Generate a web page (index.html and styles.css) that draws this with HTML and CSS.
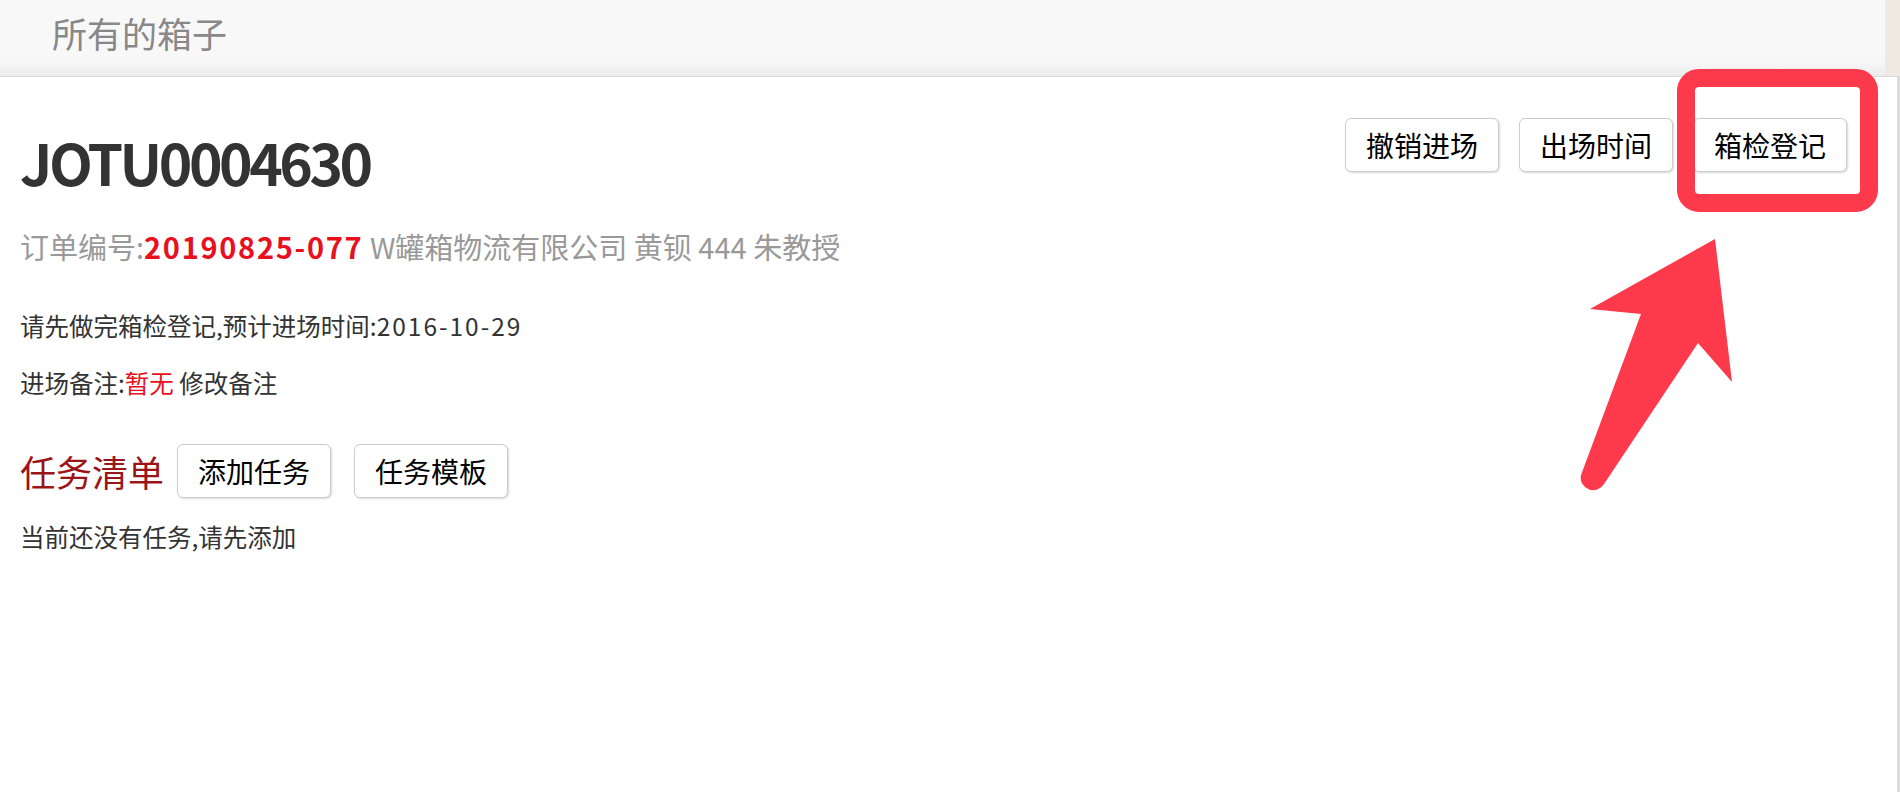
FILE: index.html
```html
<!DOCTYPE html>
<html lang="zh-CN">
<head>
    <meta charset="UTF-8">
    <title>所有的箱子</title>
    <link rel="stylesheet" href="styles.css">
</head>
<body>
    <header class="topbar">
        <span class="topbar-title">所有的箱子</span>
    </header>

    <main class="box-page">
        <div class="box-head">
            <h1 class="box-no">JOTU0004630</h1>
            <div class="box-actions">
                <button class="btn">撤销进场</button>
                <button class="btn">出场时间</button>
                <button class="btn">箱检登记</button>
            </div>
        </div>

        <p class="order-info">订单编号:<b class="order-no">20190825-077</b> W罐箱物流有限公司 黄钡 444 朱教授</p>

        <p class="notice notice-first">请先做完箱检登记,预计进场时间:<span class="date">2016-10-29</span></p>
        <p class="notice">进场备注:<span class="text-red">暂无</span> 修改备注</p>

        <div class="task-head">
            <h2 class="task-title">任务清单</h2>
            <button class="btn">添加任务</button>
            <button class="btn">任务模板</button>
        </div>
        <p class="notice notice-empty">当前还没有任务,请先添加</p>
    </main>

    <!-- annotation drawn over the page -->
    <div class="mark-box"></div>
    <svg class="mark-arrow" width="175" height="270" viewBox="1570 230 175 270">
        <path d="M1715 239 L1732 382 L1698 343 L1604 484 A12.5 12.5 0 0 1 1581 475 L1641 314 L1590 309 Z" fill="#fc3a4b"/>
    </svg>
</body>
</html>
```

FILE: styles.css
```css
* {
    margin: 0;
    padding: 0;
    box-sizing: border-box;
}

body {
    background-color: white;
    font-family: "Noto Sans CJK SC", "Noto Sans", sans-serif;
    color: #333;
}

.topbar {
    height: 77px;
    padding: 0 0 12px 52px;
    display: flex;
    align-items: center;
    background: linear-gradient(#f8f8f8 80%, #ececec);
    border-bottom: 1px solid #d9d9d9;
    box-shadow: inset -15px 0 0 #efe9e2;
}

.topbar-title {
    font-size: 35px;
    color: #888;
}

.box-page {
    min-height: 715px;
    padding: 41px 50px 0 20px;
    border-right: 3px solid #dcdcd8;
}

.box-head {
    display: flex;
    justify-content: space-between;
    align-items: flex-start;
}

.box-no {
    margin-top: 10px;
    font-size: 57px;
    line-height: 66px;
    font-weight: bold;
    letter-spacing: -3.5px;
    color: #333;
}

.box-actions {
    display: flex;
    gap: 20px;
}

.btn {
    height: 54px;
    padding: 0 20px;
    background-color: white;
    border: 1px solid #ccc;
    border-radius: 6px;
    box-shadow: 1px 1px 2px rgba(0, 0, 0, 0.15);
    font-family: inherit;
    font-size: 28px;
    line-height: 52px;
    color: #000;
    cursor: pointer;
}

.order-info {
    margin-top: 32px;
    font-size: 29px;
    line-height: 40px;
    color: #999;
}

.order-no {
    color: #e8101e;
    letter-spacing: 1.7px;
}

.notice {
    margin-top: 23px;
    font-size: 24.5px;
    line-height: 34px;
    color: #333;
}

.notice .date {
    letter-spacing: 2px;
}

.notice-first {
    margin-top: 43px;
}

.notice-empty {
    margin-top: 22px;
}

.text-red {
    color: #e8101e;
}

.task-head {
    margin-top: 44px;
    display: flex;
    align-items: center;
    gap: 13px;
}

.task-head .btn + .btn {
    margin-left: 10px;
}

.task-title {
    font-size: 36px;
    font-weight: normal;
    color: #9a1418;
}

.mark-box {
    position: absolute;
    left: 1677px;
    top: 69px;
    width: 201px;
    height: 143px;
    border: 18px solid #fc3a4b;
    border-radius: 22px;
}

.mark-arrow {
    position: absolute;
    left: 1570px;
    top: 230px;
}
```
